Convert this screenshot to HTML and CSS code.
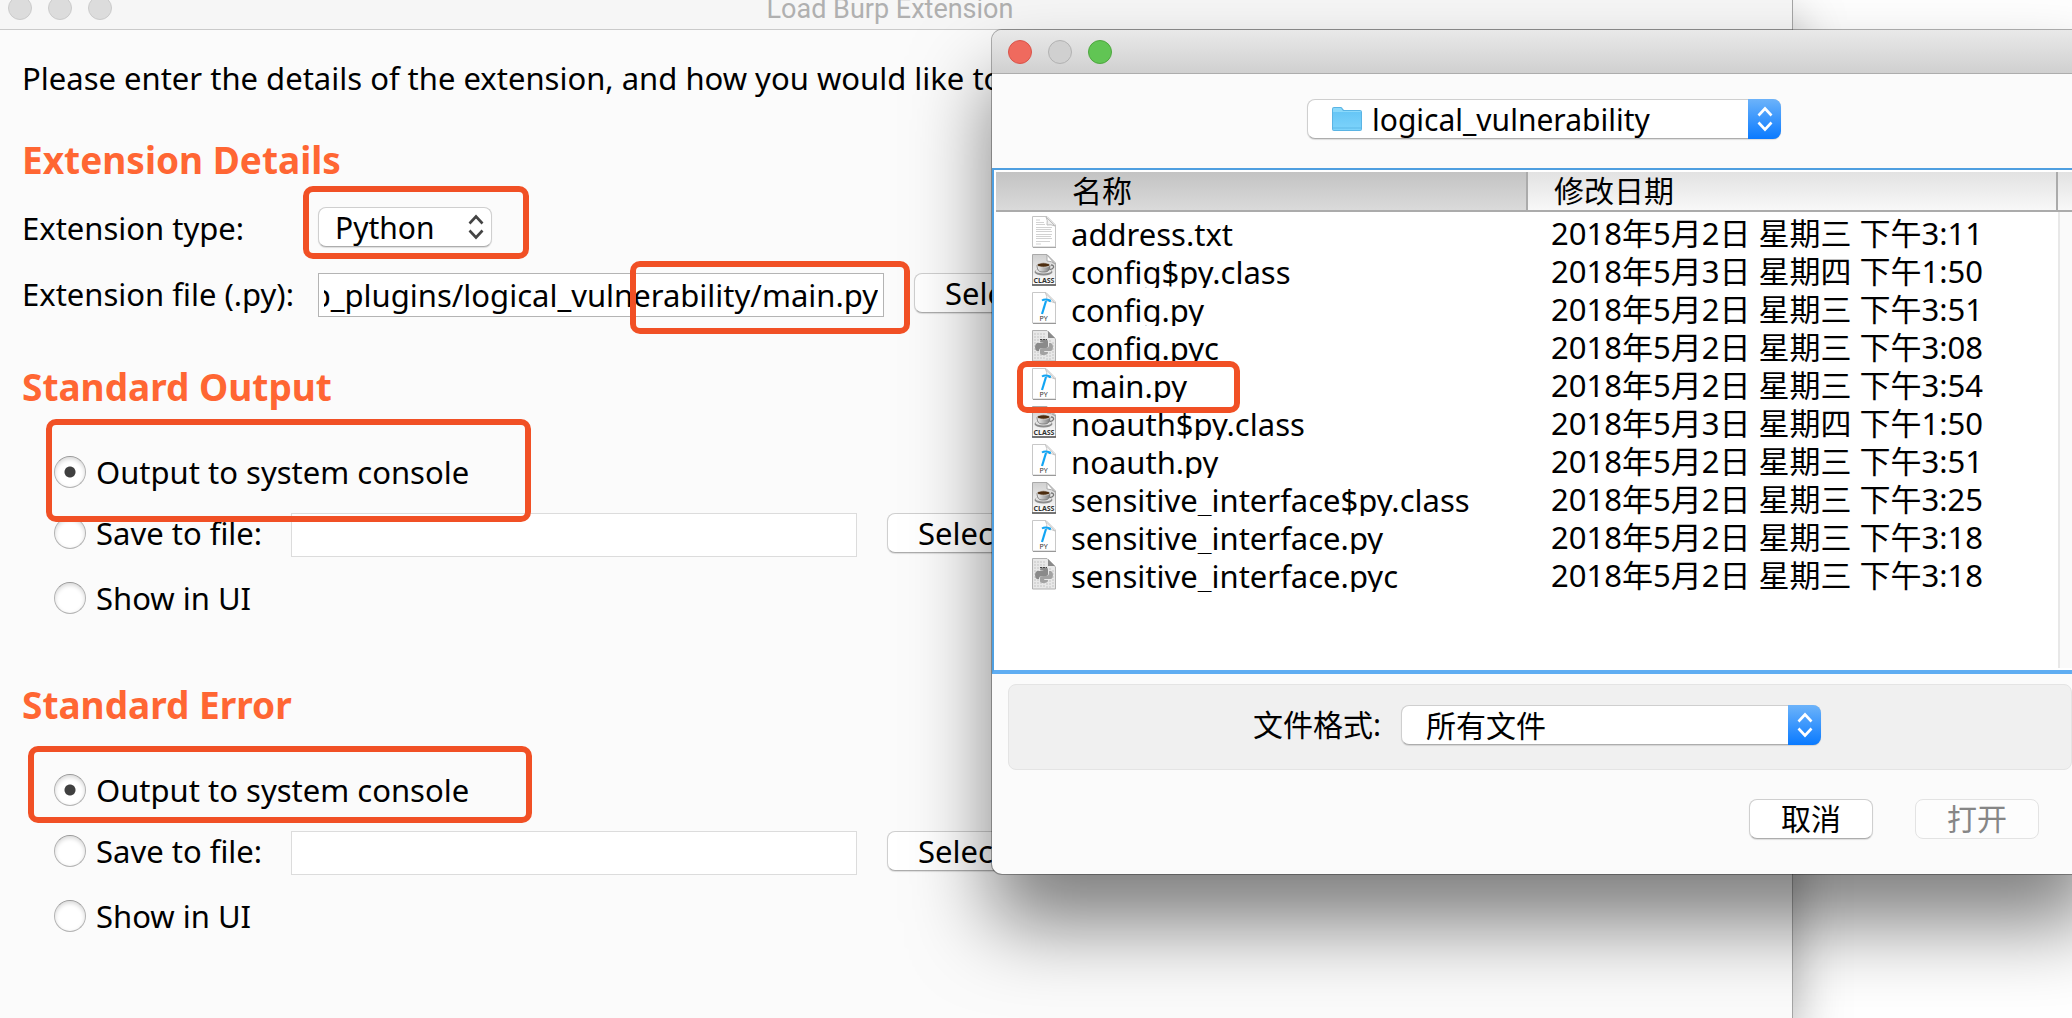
FILE: index.html
```html
<!DOCTYPE html>
<html lang="zh-CN">
<head>
<meta charset="utf-8">
<title>Load Burp Extension</title>
<link rel="stylesheet" href="styles.css">
</head>
<body>
<svg class="defs" aria-hidden="true">
  <defs>
    <linearGradient id="folder-fill" x1="0" y1="0" x2="0" y2="1"><stop offset="0" stop-color="#66c6f6"/><stop offset="1" stop-color="#7dd3fb"/></linearGradient>
    <linearGradient id="class-fill" x1="0" y1="0" x2="0" y2="1"><stop offset="0" stop-color="#d0d0d0"/><stop offset="1" stop-color="#ffffff"/></linearGradient>
    <linearGradient id="cup-fill" x1="0" y1="0" x2="1" y2="0"><stop offset="0" stop-color="#f2f2f2"/><stop offset="1" stop-color="#7c7c7c"/></linearGradient>
  </defs>
  <symbol id="arrows" viewBox="0 0 16 26"><path d="M1.5 9.5 8 2.5l6.500 7M1.500 16.500 8 23.500l6.500-7" fill="none" stroke="currentColor" stroke-width="2.600"/></symbol>
  <symbol id="folder" viewBox="0 0 30 26">
    <path d="M0 3q0-2 2-2h7q1 0 2 2l1 1h16q2 0 2 2v17q0 2-2 2H2q-2 0-2-2z" fill="#5ab4e4"/>
    <path d="M1 6h28v17q0 1-1 1H2q-1 0-1-1z" fill="url(#folder-fill)"/>
    <path d="M1 5V3q0-1 1-1h7l2 3h17q1 0 1 1H1z" fill="#8ad9fb"/>
    <path d="M1 22h28" stroke="#5cb9e9"/>
  </symbol>
  <symbol id="file-txt" viewBox="0 0 24 32">
    <path d="M.5.5H15L23.500 9v22H.5z" fill="#fff" stroke="#c4c4c4"/>
    <path d="M1 31.500h23" stroke="#a8a8a8"/>
    <path d="M14 1q2 3 1 8 4-1 8 1z" fill="#f1f1f1" stroke="#bdbdbd"/>
    <path d="M4 4h4M4 6.500h8M4 8.500h9M4 11.500h16M4 13.500h15M4 15.500h16M4 18.500h16M4 20.500h15M4 22.500h16M4 25.500h14M4 28h5" stroke="#d2d2d2" stroke-width="1"/>
  </symbol>
  <symbol id="file-class" viewBox="0 0 24 32">
    <path d="M.5.5H15L23.500 9v22H.5z" fill="url(#class-fill)" stroke="#aaa"/>
    <path d="M0 31h24" stroke="#555" stroke-width="1.500"/>
    <path d="M15 1v6q5 0 8 3z" fill="#fff" stroke="#aaa"/>
    <ellipse cx="11.500" cy="18" rx="9" ry="3.500" fill="#8b8b8b"/>
    <ellipse cx="11.500" cy="17" rx="8" ry="2.600" fill="#e2e2e2"/>
    <path d="M19 11q3 0 2.500 2.500-1 2-4 2" fill="none" stroke="#777" stroke-width="1.400"/>
    <path d="M5 11q0 7 5 7h3q5 0 5-7z" fill="url(#cup-fill)" stroke="#666" stroke-width=".7"/>
    <ellipse cx="11.500" cy="11" rx="6.500" ry="2.200" fill="#4d2d0f" stroke="#ddd" stroke-width=".8"/>
    <text x="12" y="28.500" text-anchor="middle" class="icon-class">CLASS</text>
  </symbol>
  <symbol id="file-py" viewBox="0 0 24 32">
    <path d="M.5.5H14L23.500 10v21H.5z" fill="#fff" stroke="#c8c8c8"/>
    <path d="M1 31.500h23" stroke="#999"/>
    <path d="M13.500 1q2 3 1 8 5 0 8.500 2z" fill="#f6f6f6" stroke="#c8c8c8"/>
    <path d="M14 9 10 22" stroke="#12a5f4" stroke-width="2.200"/>
    <path d="M10 8.500q3-2 8 0l-.5 1.500" fill="none" stroke="#12a5f4" stroke-width="2"/>
    <text x="11.500" y="28.500" text-anchor="middle" class="icon-py">PY</text>
  </symbol>
  <symbol id="file-pyc" viewBox="0 0 24 32">
    <path d="M.5.500H15L23.500 9v22H.5z" fill="#e8e8e8" stroke="#b0b0b0"/>
    <path d="M3 3v26M6 3v26M9 3v26M12 3v26M15 10v20M18 10v20M21 12v18" stroke="#c4c4c4" stroke-dasharray="2 1"/>
    <path d="M16 1v7h7z" fill="#8a8a8a"/>
    <path d="M8 12q0-3 4-3t4 3v4q0 2-3 2h-3q-3 0-3 3H5q-2-1-2-4t2-4h7" fill="#8a8a8a"/>
    <path d="M17 13h2q2 1 2 4t-2 4h-7v1h4q0 3-4 3t-4-2v-3q0-2 3-2h3q3 0 3-3z" fill="#a2a2a2"/>
    <path d="M8 9.500h7" stroke="#444" stroke-dasharray="2 1"/>
  </symbol>
</svg>

<main class="desktop">
  <section class="window" aria-label="Load Burp Extension">
    <header class="window-bar">
      <span class="lights"><span class="light"></span><span class="light"></span><span class="light"></span></span>
      <h1 class="window-title">Load Burp Extension</h1>
    </header>
    <form class="form">
      <p class="intro">Please enter the details of the extension, and how you would like to</p>

      <h2 class="heading heading-first">Extension Details</h2>
      <div class="details">
        <label class="label" for="type">Extension type:</label>
        <div class="select-box type-box">
          <select id="type" class="select"><option>Python</option></select>
          <svg class="arrows"><use href="#arrows"/></svg>
          <span class="mark mark-type"></span>
        </div>
        <label class="label" for="file">Extension file (.py):</label>
        <div class="file-row">
          <div class="field">
            <input id="file" class="input input-path" type="text" value="burp_plugins/logical_vulnerability/main.py">
            <span class="mark mark-file"></span>
          </div>
          <button class="button" type="button">Select file ...</button>
        </div>
      </div>

      <h2 class="heading">Standard Output</h2>
      <div class="options">
        <div class="option">
          <label class="choice"><input class="radio" type="radio" name="out" checked>Output to system console</label>
          <span class="mark mark-out"></span>
        </div>
        <div class="option save">
          <label class="choice"><input class="radio" type="radio" name="out">Save to file:</label>
          <input class="input input-off" type="text" aria-label="Output file">
          <button class="button" type="button">Select file ...</button>
        </div>
        <div class="option">
          <label class="choice"><input class="radio" type="radio" name="out">Show in UI</label>
        </div>
      </div>

      <h2 class="heading heading-error">Standard Error</h2>
      <div class="options">
        <div class="option">
          <label class="choice"><input class="radio" type="radio" name="err" checked>Output to system console</label>
          <span class="mark mark-err"></span>
        </div>
        <div class="option save">
          <label class="choice"><input class="radio" type="radio" name="err">Save to file:</label>
          <input class="input input-off" type="text" aria-label="Error file">
          <button class="button" type="button">Select file ...</button>
        </div>
        <div class="option">
          <label class="choice"><input class="radio" type="radio" name="err">Show in UI</label>
        </div>
      </div>
    </form>
  </section>

  <section class="dialog" role="dialog" aria-label="logical_vulnerability">
    <header class="dialog-bar">
      <span class="lights"><span class="light light-red"></span><span class="light light-grey"></span><span class="light light-green"></span></span>
    </header>
    <div class="folder-row">
      <div class="select-box folder-box">
        <select class="select select-folder" aria-label="Folder"><option>logical_vulnerability</option></select>
        <svg class="folder"><use href="#folder"/></svg>
        <span class="stepper"><svg class="arrows"><use href="#arrows"/></svg></span>
      </div>
    </div>
    <div class="files">
      <table class="table">
        <colgroup><col class="col-name"><col class="col-date"><col></colgroup>
        <thead><tr><th class="sorted">名称</th><th>修改日期</th><th></th></tr></thead>
        <tbody>
          <tr><td><span class="file"><svg class="icon"><use href="#file-txt"/></svg>address.txt</span></td><td class="date">2018年5月2日 星期三 下午3:11</td><td class="track"></td></tr>
          <tr><td><span class="file"><svg class="icon"><use href="#file-class"/></svg>config$py.class</span></td><td class="date">2018年5月3日 星期四 下午1:50</td><td class="track"></td></tr>
          <tr><td><span class="file"><svg class="icon"><use href="#file-py"/></svg>config.py</span></td><td class="date">2018年5月2日 星期三 下午3:51</td><td class="track"></td></tr>
          <tr><td><span class="file"><svg class="icon"><use href="#file-pyc"/></svg>config.pyc</span></td><td class="date">2018年5月2日 星期三 下午3:08</td><td class="track"></td></tr>
          <tr><td class="marked"><span class="file"><svg class="icon"><use href="#file-py"/></svg>main.py</span><span class="mark mark-main"></span></td><td class="date">2018年5月2日 星期三 下午3:54</td><td class="track"></td></tr>
          <tr><td><span class="file"><svg class="icon"><use href="#file-class"/></svg>noauth$py.class</span></td><td class="date">2018年5月3日 星期四 下午1:50</td><td class="track"></td></tr>
          <tr><td><span class="file"><svg class="icon"><use href="#file-py"/></svg>noauth.py</span></td><td class="date">2018年5月2日 星期三 下午3:51</td><td class="track"></td></tr>
          <tr><td><span class="file"><svg class="icon"><use href="#file-class"/></svg>sensitive_interface$py.class</span></td><td class="date">2018年5月2日 星期三 下午3:25</td><td class="track"></td></tr>
          <tr><td><span class="file"><svg class="icon"><use href="#file-py"/></svg>sensitive_interface.py</span></td><td class="date">2018年5月2日 星期三 下午3:18</td><td class="track"></td></tr>
          <tr><td><span class="file"><svg class="icon"><use href="#file-pyc"/></svg>sensitive_interface.pyc</span></td><td class="date">2018年5月2日 星期三 下午3:18</td><td class="track"></td></tr>
          <tr class="filler"><td></td><td></td><td class="track"></td></tr>
        </tbody>
      </table>
    </div>
    <div class="format">
      <label for="format">文件格式:</label>
      <div class="select-box format-box">
        <select id="format" class="select select-format"><option>所有文件</option></select>
        <span class="stepper"><svg class="arrows"><use href="#arrows"/></svg></span>
      </div>
    </div>
    <footer class="actions">
      <button class="button action" type="button">取消</button>
      <button class="button action" type="button" disabled>打开</button>
    </footer>
  </section>
</main>
</body>
</html>
```
FILE: styles.css
```css
* { box-sizing: border-box; }

body {
  margin: 0;
  background: #fff;
  color: #000;
  font: 31px/40px "Noto Sans", "Noto Sans CJK SC", sans-serif;
  overflow: hidden;
}

h1, h2, p { margin: 0; }

input, select, button {
  margin: 0;
  color: inherit;
  font: inherit;
}

.defs { position: absolute; width: 0; height: 0; }
.icon-class { font: bold 7px "Noto Sans", sans-serif; fill: #333; }
.icon-py { font: 7px "Noto Sans", sans-serif; fill: #333; }

.desktop {
  position: relative;
  min-height: 100vh;
  display: flex;
  overflow: hidden;
}

/* Background window */
.window {
  flex: 1;
  margin-right: 279px;
  background: #fbfbfb;
  border-right: 1px solid #a5a5a5;
  box-shadow: 0 20px 50px rgba(0, 0, 0, .35);
}

.window-bar {
  position: relative;
  height: 30px;
  background: #f6f6f6;
  border-bottom: 1px solid #cacaca;
}

.window-title {
  padding-right: 12px;
  color: #b0b0b0;
  font: 27px/18px Roboto, sans-serif;
  text-align: center;
}

.lights { display: flex; gap: 16px; }
.window-bar .lights { position: absolute; left: 8px; top: -4px; }

.light {
  width: 24px;
  height: 24px;
  border: 1px solid #cbcbcb;
  border-radius: 50%;
  background: #dcdcdc;
}
.light-red { background: #ef6a5e; border-color: #d9544a; }
.light-grey { background: #d0d0d0; border-color: #b2b2b2; }
.light-green { background: #61c554; border-color: #4ea73f; }

.form { padding: 28px 22px 0; }

.intro { white-space: nowrap; }

.heading {
  margin-top: 50px;
  color: #ff6633;
  font-size: 37px;
  line-height: 40px;
  font-weight: 700;
}
.heading-first { margin-top: 42px; }
.heading-error { margin-top: 67px; }

.details {
  display: grid;
  grid-template-columns: 296px 1fr;
  row-gap: 26px;
  margin-top: 27px;
}

.label { height: 40px; line-height: 42px; }
.file-row { display: flex; align-items: flex-start; gap: 30px; }
.field { position: relative; flex: none; }

.input {
  display: block;
  width: 566px;
  height: 44px;
  padding: 0 5px;
  border: 1px solid #b4b4b4;
  background: #fff;
}
.input-path { direction: rtl; }
.input-off { border-color: #dcdcdc; }

.button {
  height: 40px;
  padding: 0 30px;
  border: 1px solid #cfcfcf;
  border-bottom-color: #adadad;
  border-radius: 8px;
  background: #fff;
  box-shadow: 0 1px 1px rgba(0, 0, 0, .12);
  line-height: 36px;
  white-space: nowrap;
}

.button:disabled {
  background: #fdfdfd;
  border-color: #e3e3e3;
  color: #868686;
  box-shadow: none;
}

.options {
  display: grid;
  row-gap: 21px;
  margin: 45px 0 0 32px;
}
.option { position: relative; height: 40px; }

.save {
  display: grid;
  grid-template-columns: 237px 566px max-content;
  height: 44px;
}
.save .button { margin-left: 30px; }

.choice { display: flex; align-items: center; gap: 10px; height: 40px; }

.radio {
  appearance: none;
  width: 32px;
  height: 32px;
  border: 1px solid #b4b4b4;
  border-top-color: #999;
  border-radius: 50%;
  background: #fff;
  box-shadow: inset 0 2px 4px rgba(0, 0, 0, .16);
}
.radio:checked { background: radial-gradient(circle, #404040 5px, #fff 6px); }

/* Drop-downs */
.select-box { position: relative; height: 40px; }
.type-box { width: 174px; }
.folder-box { width: 474px; }
.format-box { width: 420px; }

.select {
  appearance: none;
  width: 100%;
  height: 40px;
  padding: 0 40px 0 16px;
  border: 1px solid #cfcfcf;
  border-bottom-color: #adadad;
  border-radius: 8px;
  background: #fff;
  box-shadow: 0 1px 1px rgba(0, 0, 0, .12);
  font-size: 30px;
}
.select-folder { padding-left: 64px; }
.select-format { padding-left: 24px; }

.arrows { width: 16px; height: 26px; color: #444; }
.type-box .arrows { position: absolute; right: 8px; top: 7px; }
.folder { position: absolute; left: 25px; top: 7px; width: 30px; height: 26px; }

.stepper {
  position: absolute;
  right: 0;
  top: 0;
  display: grid;
  place-items: center;
  width: 33px;
  height: 40px;
  border-radius: 0 8px 8px 0;
  background: linear-gradient(#6cb3fa, #0a7aff);
  pointer-events: none;
}
.stepper .arrows { color: #fff; }

/* File chooser */
.dialog {
  position: absolute;
  left: 992px;
  right: -24px;
  top: 30px;
  border-radius: 10px;
  background: #fbfbfb;
  box-shadow: 0 0 0 1px rgba(0, 0, 0, .3), 0 50px 80px rgba(0, 0, 0, .5);
}

.dialog-bar {
  height: 44px;
  padding: 10px 16px;
  border-bottom: 1px solid #adadad;
  border-radius: 10px 10px 0 0;
  background: linear-gradient(#e9e9e9, #d0d0d0);
}

.folder-row { display: flex; justify-content: center; padding: 25px 0 29px; }

.files {
  padding: 2px;
  border: 2px solid #4f9fe0;
  border-bottom: 4px solid #5fadf2;
  background: #fff;
}

.table {
  width: 100%;
  border-collapse: separate;
  border-spacing: 0;
  table-layout: fixed;
}
.col-name { width: 532px; }
.col-date { width: 530px; }

th {
  height: 40px;
  padding: 0 0 0 26px;
  border-right: 2px solid #ababab;
  border-bottom: 2px solid #ababab;
  background: linear-gradient(#e2e2e2, #f8f8f8);
  font-size: 30px;
  font-weight: 400;
  line-height: 38px;
  text-align: left;
}
.sorted { padding-left: 76px; background: linear-gradient(#c3c3c3, #dadada); }

td { padding: 0; height: 38px; line-height: 34px; white-space: nowrap; }
.date { padding: 4px 0 0 23px; }
.track { border-left: 2px solid #e8e8e8; background: #fafafa; }
.filler td { height: 76px; }
.marked { position: relative; }

.file {
  display: flex;
  gap: 15px;
  height: 38px;
  padding: 4px 0 0 36px;
  line-height: 36px;
  overflow: hidden;
}
.icon { flex: none; width: 24px; height: 32px; }

.format {
  display: flex;
  justify-content: center;
  align-items: center;
  gap: 20px;
  height: 86px;
  margin: 10px 24px 0 16px;
  padding: 0 6px 4px 0;
  border: 1px solid #e4e4e4;
  border-radius: 8px;
  background: #f0f0f0;
  font-size: 30px;
}

.actions {
  display: flex;
  justify-content: flex-end;
  gap: 42px;
  padding: 29px 57px 35px;
}
.action { width: 124px; font-size: 30px; }

/* Highlight frames */
.mark {
  position: absolute;
  z-index: 2;
  border: 6px solid #f15025;
  border-radius: 10px;
  pointer-events: none;
}
.mark-type { left: -15px; right: -37px; top: -21px; bottom: -12px; }
.mark-file { left: 312px; right: -26px; top: -12px; bottom: -17px; }
.mark-out { left: -8px; width: 485px; top: -33px; bottom: -30px; }
.mark-err { left: -26px; width: 504px; top: -24px; bottom: -13px; }
.mark-main { left: 21px; width: 223px; top: -3px; bottom: -11px; }
```
